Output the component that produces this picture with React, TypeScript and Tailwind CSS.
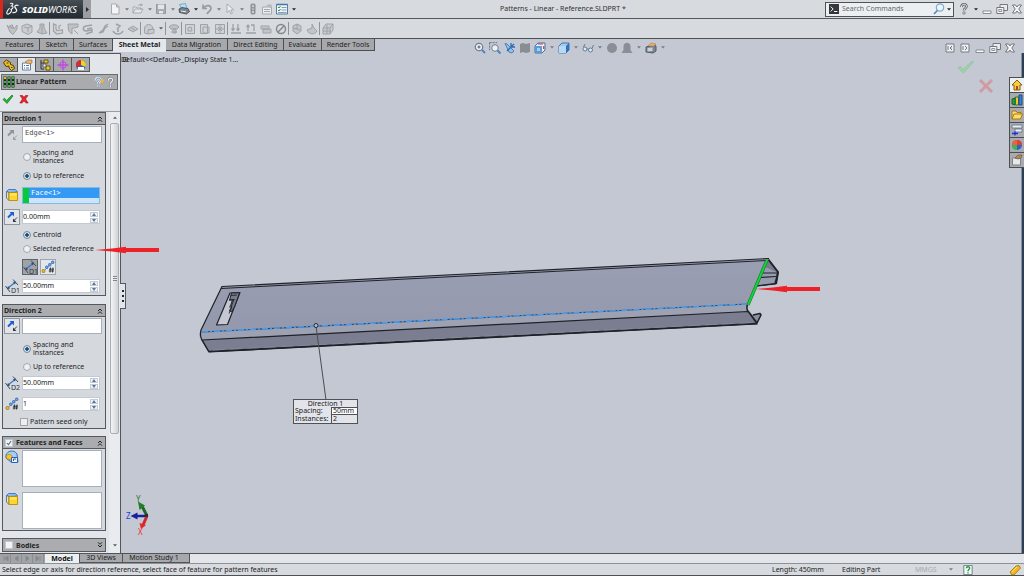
import React from 'react';

type Kids = { children?: React.ReactNode; className?: string };

function Ico({ children, className = 'size-3' }: Kids) {
  return (
    <svg viewBox="0 0 12 12" className={`shrink-0 ${className}`} fill="none" aria-hidden="true">
      {children}
    </svg>
  );
}

function IconButton({ label, children, className = '' }: Kids & { label: string }) {
  return (
    <button type="button" aria-label={label} className={`flex shrink-0 items-center justify-center ${className}`}>
      {children}
    </button>
  );
}

function Caret({ label, className = 'w-[11px]', color = '#55595e' }: { label: string; className?: string; color?: string }) {
  return (
    <IconButton label={label} className={className}>
      <svg viewBox="0 0 4 3" className="h-[3px] w-1" aria-hidden="true">
        <path d="M0 .3h4L2 2.6z" fill={color} />
      </svg>
    </IconButton>
  );
}

/* ---------- title bar ---------- */

const fileIcons: { label: string; art: React.ReactNode; caret: string }[] = [
  { label: 'New', caret: '#777', art: <path d="M2.500 1h5L10 3.500V11H2.500zM7.500 1v3H10" stroke="#a7abb0" fill="#f2f4f6" /> },
  { label: 'Open', caret: '#777', art: <path d="M1 10V4h3l1 1h4v2M1 10l2-4h8l-2 4zM6 3c1-2 3-2 4-1M10 .5v2H8" stroke="#a2a6ab" fill="#e4e7ea" strokeWidth=".9" /> },
  { label: 'Save', caret: '#777', art: <><path d="M1.500 1.500h9v9h-9z" fill="#a9adb2" stroke="#979ba0" /><path d="M3 1.500h6V6H3zM4 8h4v2.500H4z" fill="#e3e6e9" /></> },
  { label: 'Print', caret: '#222', art: <><path d="M1.500 1.500l6-1 1.500 5-5 1z" fill="#b7ddf5" stroke="#5c96bd" strokeWidth=".7" /><path d="M1 6l3-1.500 6 1 1.500 3-3 2.500-7-1.500z" fill="#7b848d" stroke="#30373e" strokeWidth=".7" /><path d="M3 8l5 .8" stroke="#e8edf0" /></> },
  { label: 'Undo', caret: '#777', art: <path d="M2 1.500v4h4M2.500 5C5 1.500 10 2 10 5.500 10 8 7 8.500 6 11" stroke="#999da3" strokeWidth="1.700" /> },
  { label: 'Select', caret: '#777', art: <path d="M3 1v8.500l2.200-2L7 11l1.400-.7-1.600-3.400h3z" stroke="#9da1a6" fill="#edf0f2" strokeWidth=".8" /> },
];

function TitleBar() {
  return (
    <header className="flex h-[19px] shrink-0 items-center border-b border-[#55585b] bg-[#d7dade]">
      <div className="flex h-[18px] w-[83px] shrink-0 items-center border-l-[3px] border-[#d8271f] bg-gradient-to-b from-[#454e55] to-[#222a31] pl-[3px] text-white">
        <svg viewBox="0 0 14 14" className="size-3.5 shrink-0" fill="none" stroke="#f5f7f8" aria-hidden="true">
          <path d="M4 1.500c3-.8 4 .8 1.500 2.500 2 .3 2.500 2.500-1 3.500M3.500 6C1 9 0 11.500 1.500 12s4.500-2 4-4.500" strokeWidth="1.100" />
          <path d="M12.500 3.500c-2.500-1-4.500.2-3.500 2l1.500 2c1 2-1.500 3.500-4 3" strokeWidth="1.300" />
        </svg>
        <span className="ml-0.5 pt-[2px] text-[9px] leading-3">
          <b className="font-extrabold italic">SOLID</b><i>WORKS</i>
        </span>
      </div>
      <IconButton label="Show menu" className="h-[18px] w-2 bg-[#9a9da1]">
        <svg viewBox="0 0 3 5" className="h-[5px] w-[3px]" aria-hidden="true"><path d="M0 0l3 2.500L0 5z" fill="#26292c" /></svg>
      </IconButton>
      <div className="ml-[18px] flex items-center">
        {fileIcons.map((i) => (
          <React.Fragment key={i.label}>
            <IconButton label={i.label}><Ico>{i.art}</Ico></IconButton>
            <Caret label={`${i.label} options`} color={i.caret} />
          </React.Fragment>
        ))}
        <IconButton label="Rebuild" className="mr-[2px]">
          <Ico><rect x="3.500" y=".5" width="5" height="11" rx="1.800" fill="#8e9297" /><circle cx="6" cy="3" r="1.200" fill="#c8cbce" /><circle cx="6" cy="6" r="1.200" fill="#b4b7bb" /><circle cx="6" cy="9" r="1.200" fill="#c8cbce" /></Ico>
        </IconButton>
        <IconButton label="File properties" className="mr-[3px]">
          <Ico><path d="M1.500 4h9v7h-9z" fill="#eceef0" stroke="#a5a8ad" /><path d="M3 6.500h6M3 8.500h6" stroke="#a5a8ad" /><path d="M5 3l3-2 3 1-1 3z" fill="#b7babe" /></Ico>
        </IconButton>
        <IconButton label="Options">
          <Ico><path d="M.5 1.500h11v9.500H.5z" fill="#eef5fb" stroke="#5b7ea3" /><path d="M.5 1.500h11" stroke="#3e74b0" strokeWidth="1.500" /><path d="M2 4l1 1 1.500-2M2 7l1 1 1.500-2" stroke="#2c9b36" /><path d="M5.500 4.500h5M5.500 7h5M2 9.500h8.500" stroke="#75869a" strokeWidth=".8" /></Ico>
        </IconButton>
        <Caret label="Options menu" color="#222" />
      </div>
      <h1 className="flex-1 pl-[201px] text-[7px] leading-3 whitespace-nowrap text-[#303236]">Patterns - Linear - Reference.SLDPRT *</h1>
      <div className="flex h-[15px] w-[129px] items-center border border-[#505356] bg-[#eceff2] pl-[3px]">
        <Ico className="size-[10px]"><path d="M0 0h12v12H0z" fill="#33373b" /><path d="M2 3l3 3-3 3M6 9h4" stroke="#fff" strokeWidth="1.200" /></Ico>
        <input aria-label="Search Commands" placeholder="Search Commands" className="ml-[3px] h-3 min-w-0 flex-1 bg-transparent text-[7px] leading-3 outline-none placeholder:text-[#66696d]" />
        <IconButton label="Search">
          <Ico><circle cx="7" cy="4.500" r="3.700" fill="#e9f6ff" stroke="#7fa6cc" strokeWidth="1.200" /><path d="M4.300 7.500L1 11" stroke="#5b86bb" strokeWidth="1.700" /></Ico>
        </IconButton>
        <Caret label="Search scope" className="w-2" color="#222" />
      </div>
      <div className="flex items-center pl-1">
        <IconButton label="Help"><Ico><path d="M3.500 4c0-3.500 5-3.500 5-.7C8.500 5.500 6 5 6 7.500" stroke="#62666b" strokeWidth="2.600" /><path d="M3.500 4c0-3.500 5-3.500 5-.7C8.500 5.500 6 5 6 7.500" stroke="#f2f4f5" strokeWidth="1" /><circle cx="6" cy="10" r="1.200" fill="#f2f4f5" stroke="#62666b" strokeWidth=".8" /></Ico></IconButton>
        <Caret label="Help menu" color="#222" />
        <WindowButtons />
      </div>
    </header>
  );
}

function WindowButtons() {
  return (
    <div className="flex items-center gap-[3px] pr-px">
      <IconButton label="Minimize"><Ico><path d="M2 8h8v2.500H2z" fill="#f8f9fa" stroke="#74787e" strokeWidth=".8" /></Ico></IconButton>
      <IconButton label="Restore"><Ico><path d="M4 1.500h7.500v6H4z" fill="#e9ebee" stroke="#74787e" /><path d="M.8 4.500h7v6h-7z" fill="#f6f7f8" stroke="#74787e" /><path d="M2.800 6.500h3v2h-3z" stroke="#74787e" strokeWidth=".8" /></Ico></IconButton>
      <IconButton label="Close"><Ico><path d="M1.500 2h3L6 4l1.500-2h3L7.800 6l2.700 4h-3L6 8l-1.500 2h-3l2.700-4z" fill="#f4f5f6" stroke="#686c72" strokeWidth=".9" /></Ico></IconButton>
    </div>
  );
}

/* ---------- sheet metal toolbar ---------- */

const G = '#9fa2a6';
const sheetTools: { label: string; art: React.ReactNode; sep?: boolean; caret?: boolean }[] = [
  { label: 'Base Flange', art: <path d="M1 2l3 7 3 2.500L11 6V2L8 6 6 1.500v4L4 2v3z" fill="#c0c3c6" stroke={G} /> },
  { label: 'Convert to Sheet Metal', art: <path d="M1 3l5-2 5 2v6l-4 2.500-6-3zM3 4l4 1v4M7 5l4-2" fill="#c9ccd0" stroke={G} /> },
  { label: 'Lofted Bend', art: <path d="M4 1h4v4l3 5-5 1-5-2 3-4zM6 1v10" fill="#c0c3c6" stroke={G} />, sep: true },
  { label: 'Edge Flange', art: <path d="M1.500 1v7l3 3 6-1V7L5 7.500 4 6V2zM7 6V3l2-1" fill="#d2d5d8" stroke={G} strokeWidth="1.200" /> },
  { label: 'Miter Flange', art: <path d="M1 1h10v3L5 5.500V11L1.500 8zM7 7l4 4" fill="#bfc2c5" stroke={G} /> },
  { label: 'Hem', art: <path d="M10 2L4 3C0 4 1 8 4 8l6-1v2l-6 2M10 5L5 6" stroke={G} strokeWidth="1.500" /> },
  { label: 'Jog', art: <path d="M11 1L8 3 6 7 2 10M11 3L8 5 6 9l-4 1" stroke={G} strokeWidth="1.300" /> },
  { label: 'Sketched Bend', art: <path d="M4 1l4 2-3 3M6 6v3M1 8c2 4 8 4 10 0" stroke={G} strokeWidth="1.600" /> },
  { label: 'Cross-Break', art: <path d="M1 6l5-3 5 3-5 3zM3.500 4.500l5 3" fill="#c3c6c9" stroke={G} />, sep: true },
  { label: 'Corners', art: <path d="M1.500 10V6c0-6 8-6 8.500 0l-5 1v4zM5 7l6-1v4l-6 1" fill="#c9ccd0" stroke={G} />, sep: true, caret: true },
  { label: 'Forming Tool', art: <path d="M1 4c2-3 8-3 10 0L9 6H3zM5 6h3v4H5zM3 9h6" fill="#bfc2c5" stroke={G} />, sep: true },
  { label: 'Extruded Cut', art: <path d="M1.500 1.500h9v9h-9zM4 5l3-1 1 4H4z" fill="#d0d3d6" stroke={G} /> },
  { label: 'Simple Hole', art: <path d="M1.500 1.500h7v9h-7zM4 4h6v6H4z" fill="#d0d3d6" stroke={G} /> },
  { label: 'Vent', art: <path d="M1.500 1.500h9v9h-9zM6 1.500v9M1.500 6h9M4 4l4 4M8 4L4 8" fill="#d0d3d6" stroke={G} />, sep: true },
  { label: 'Unfold', art: <path d="M3 1v6M1.500 5.500L3 7.500l1.500-2M8 1v6M6.500 5.500L8 7.500l1.500-2M1 10h10" stroke={G} strokeWidth="1.300" /> },
  { label: 'Fold', art: <path d="M3 8V2M1.500 4L3 2l1.500 2M6 2h3v6M1 10h10" stroke={G} strokeWidth="1.300" /> },
  { label: 'Flatten', art: <path d="M1 3h8v3H1zM3 6h8v4H3z" fill="#c3c6c9" stroke={G} /> },
  { label: 'No Bends', art: <><circle cx="6" cy="6" r="4.500" stroke="#84878b" strokeWidth="1.400" /><path d="M3 9l6-6" stroke="#84878b" strokeWidth="1.400" /></>, sep: true },
  { label: 'Rip', art: <path d="M2 3l4-2 4 2v5l-4 3-4-3zM2 5l7 2M6 1v5" fill="#c3c6c9" stroke={G} /> },
  { label: 'Insert Bends', art: <path d="M6 1v4L1 7c2 5 8 5 10 1L8 5z" fill="#c3c6c9" stroke={G} />, sep: true },
  { label: 'Swept Flange', art: <path d="M4 1h7v6l-3 4H1V5zM1 5h7v6M8 5l3-4M1 8h8M5 2v9" fill="#c9ccd0" stroke={G} /> },
];

function SheetToolbar() {
  return (
    <div role="toolbar" aria-label="Sheet metal" className="flex h-5 shrink-0 items-center border-b border-[#4f5255] bg-[#d7dade] pl-1">
      {sheetTools.map((t) => (
        <React.Fragment key={t.label}>
          <IconButton label={t.label} className="w-[15px]"><Ico>{t.art}</Ico></IconButton>
          {t.caret && <Caret label={`${t.label} menu`} className="w-[9px]" />}
          {t.sep && <span className="h-[13px] w-px bg-[#8f9296]" />}
        </React.Fragment>
      ))}
    </div>
  );
}

/* ---------- command tabs and view toolbar ---------- */

const tabs = [
  { name: 'Features', w: 'w-10' },
  { name: 'Sketch', w: 'w-[34px]' },
  { name: 'Surfaces', w: 'w-[39px]' },
  { name: 'Sheet Metal', w: 'w-[53px]' },
  { name: 'Data Migration', w: 'w-[62px]' },
  { name: 'Direct Editing', w: 'w-14' },
  { name: 'Evaluate', w: 'w-[38px]' },
  { name: 'Render Tools', w: 'w-[53px]' },
];

function CommandTabs() {
  return (
    <nav role="tablist" aria-label="Commands" className="flex h-[13px] w-[375px] shrink-0">
      {tabs.map((t) => {
        const on = t.name === 'Sheet Metal';
        return (
          <button
            key={t.name}
            type="button"
            role="tab"
            aria-selected={on}
            className={`${t.w} shrink-0 whitespace-nowrap text-[7px] leading-[11px] ${on ? 'bg-[#e4e7eb] pb-[2px] font-bold text-[#222]' : 'h-3 border-r border-b border-[#4d5053] bg-[#a6a8ab] text-[#1f2123]'}`}
          >
            {t.name}
          </button>
        );
      })}
    </nav>
  );
}

const lens = (
  <><circle cx="5" cy="5" r="3.700" fill="#eaf2f8" stroke="#6f7d8b" strokeWidth="1.200" /><path d="M8 8l3 3" stroke="#4b86c6" strokeWidth="2" /></>
);

function ViewToolbar() {
  const c = '#777b82';
  return (
    <div role="toolbar" aria-label="View" className="flex h-[15px] items-center gap-[3px]">
      <IconButton label="Zoom to fit"><Ico>{lens}<path d="M3.500 5h3M5 3.500v3" stroke="#4d5964" /></Ico></IconButton>
      <IconButton label="Zoom to area"><Ico><circle cx="6" cy="6" r="3.300" fill="#eaf2f8" stroke="#6f7d8b" /><path d="M8.500 8.500l3 3" stroke="#4b86c6" strokeWidth="2" /><path d="M.6 .6h7.500M.6 .6v7.500" stroke="#6b7178" strokeDasharray="2 1" /></Ico></IconButton>
      <IconButton label="Previous view"><Ico><path d="M1 1.500l2 .5 7 7-2 2-3-1z" fill="#8fc3ec" stroke="#3d79b5" strokeWidth=".9" /><path d="M3 9l7-7M7 1v4h4" stroke="#2b6cb2" strokeWidth="1.300" /></Ico></IconButton>
      <IconButton label="Section view"><Ico><path d="M1 2l3-1 3 1 4-1v9l-4 1-3-1-3 1z" fill="#8a8d93" /></Ico></IconButton>
      <IconButton label="View orientation"><Ico><path d="M1 4l3-3h7v7l-3 3H1z" fill="#eaf3fb" stroke="#466f9b" /><path d="M1 4h7v7H1z" fill="#5a9bda" /><path d="M4 2h5M9.700 4v3" stroke="#cc3f38" strokeWidth="1.200" /><path d="M3 6h3v3H3z" fill="#a9cff0" /></Ico></IconButton>
      <Caret label="View orientation menu" className="w-[6px]" color={c} />
      <IconButton label="Display style"><Ico><path d="M1 4l3-3h7v7l-3 3H1z" fill="#9acbf3" stroke="#48739f" /><path d="M8 4l3-3v7l-3 3z" fill="#2f72c0" /><path d="M1 4h7v7H1z" fill="#b5d9f7" /></Ico></IconButton>
      <Caret label="Display style menu" className="w-[6px]" color={c} />
      <IconButton label="Hide or show items"><Ico><circle cx="3" cy="7" r="2" fill="#d9edf8" stroke="#5f7386" strokeWidth=".9" /><circle cx="8.500" cy="8" r="2" fill="#d9edf8" stroke="#5f7386" strokeWidth=".9" /><path d="M1.500 5L3 2M5 7h1.500M10 6.500L11.500 3" stroke="#5f7386" strokeWidth=".9" /></Ico></IconButton>
      <Caret label="Hide or show menu" className="w-[6px]" color={c} />
      <IconButton label="Edit appearance"><Ico><circle cx="6" cy="6" r="5" fill="#8b8e94" /></Ico></IconButton>
      <IconButton label="Apply scene"><Ico><path d="M2.500 8V4.500c0-5 7-5 7 0V8l2 3H.5z" fill="#8b8e94" /></Ico></IconButton>
      <Caret label="Scene menu" className="w-[6px]" color={c} />
      <IconButton label="View settings"><Ico><path d="M1 5l7-2 3 1v5l-3 2-7-1z" fill="#7d858d" stroke="#555b62" /><path d="M2.500 6l5-.5v3.500l-5 .5z" fill="#c9d1d8" /><path d="M3 4l3-3 5 1-2 2z" fill="#e8b270" stroke="#9a7342" strokeWidth=".5" /></Ico></IconButton>
      <Caret label="View settings menu" className="w-[6px]" color={c} />
    </div>
  );
}

/* ---------- property manager ---------- */

function Reverse({ dim }: { dim?: boolean }) {
  return (
    <IconButton label="Reverse direction" className={`size-4 ${dim ? '' : 'border border-[#8f959c] bg-[#e1e5ea]'}`}>
      <svg viewBox="0 0 12 12" className="size-3" aria-hidden="true">
        <path d="M2 6.500l4-4" stroke={dim ? '#8f949a' : '#1d5fd0'} strokeWidth="2" />
        <path d="M3.500 1H8v4.500z" fill={dim ? '#8f949a' : '#1d5fd0'} />
        <path d="M11 6.500L8.500 9" stroke={dim ? '#9a9fa5' : '#33373b'} />
        <path d="M7 7.500V11h3.500z" fill={dim ? '#9a9fa5' : '#33373b'} />
      </svg>
    </IconButton>
  );
}

function DimIcon({ n }: { n: string }) {
  return (
    <span className="relative flex size-4 shrink-0 items-center justify-center">
      <svg viewBox="0 0 14 14" className="size-3.5" fill="none" aria-hidden="true">
        <path d="M8 .5l5 5.500M.5 7l4.500 6" stroke="#454a50" />
        <path d="M3 9l7-5.500" stroke="#3a78c8" strokeWidth="1.300" />
        <path d="M2 10.300l1-3.300 2 2.600zM11 2.500L8 3l2 2.600z" fill="#274d86" />
      </svg>
      <span className="absolute right-0 bottom-0 text-[7px] leading-[6px] text-[#303439]">{n}</span>
    </span>
  );
}

function InstancesIcon() {
  return (
    <span className="flex size-4 shrink-0 items-center justify-center">
      <svg viewBox="0 0 14 14" className="size-3.5" fill="none" aria-hidden="true">
        <path d="M3 11l8-8" stroke="#49a" strokeWidth=".7" />
        <rect x="1" y="9.500" width="3" height="3" rx="1" fill="#f0b429" stroke="#936713" strokeWidth=".6" />
        <rect x="4.500" y="6" width="2.500" height="2.500" rx="1" fill="#72a9ed" stroke="#2b60b5" strokeWidth=".8" />
        <rect x="7.500" y="3.500" width="2.500" height="2.500" rx="1" fill="#72a9ed" stroke="#2b60b5" strokeWidth=".8" />
        <rect x="10.500" y="1" width="2.500" height="2.500" rx="1" fill="#72a9ed" stroke="#2b60b5" strokeWidth=".8" />
        <path d="M9.500 7.500l-.5 5M12 7.500l-.5 5M8 9.200h5M7.800 11h5" stroke="#25292d" strokeWidth=".9" />
      </svg>
    </span>
  );
}

function Cube() {
  return (
    <span className="flex size-4 shrink-0 items-start justify-center">
      <svg viewBox="0 0 14 14" className="size-3.5" aria-hidden="true">
        <path d="M1.500 3.500l2-2h7l2 2.500-8.500 .5z" fill="#8fbdf0" stroke="#3f6fb8" strokeWidth=".9" />
        <path d="M1.500 3.500L4 4.500v8L1.500 10z" fill="#f7e68c" stroke="#3f6fb8" strokeWidth=".9" />
        <path d="M4 4.500h8.500v8H4z" fill="#fdd62a" stroke="#b58a10" strokeWidth=".9" />
        <path d="M5 5.500h6.500v2H5z" fill="#ffea70" />
      </svg>
    </span>
  );
}

function FeatureIcon() {
  return (
    <span className="flex size-4 shrink-0 items-start justify-center">
      <svg viewBox="0 0 14 14" className="size-3.5" fill="none" aria-hidden="true">
        <path d="M1 8V5c1-4 8-6 11-1l1 8H6z" fill="#a9cdf0" stroke="#3a6fb1" />
        <path d="M1 6c2-2 5-2 6 0v4L2 9z" fill="#f4c828" stroke="#a98312" strokeWidth=".7" />
        <path d="M6.500 7.500h6v5h-6z" fill="#e9f2fb" stroke="#2962b7" />
        <path d="M8.500 11V9h2.500" stroke="#2962b7" />
      </svg>
    </span>
  );
}

function Group({ title, children, check, closed, className = '' }: Kids & { title: string; check?: 'on' | 'off'; closed?: boolean }) {
  return (
    <section className={`shrink-0 border border-[#55585c] bg-[#d5d9de] ${className}`}>
      <h2 className={`flex h-3 items-center bg-[#aaacaf] text-[7px] leading-[11px] font-bold text-[#222426] ${closed ? '' : 'border-b border-[#55585c]'} ${check ? 'pl-[2px]' : 'pl-px'}`}>
        {check ? (
          <label className="flex flex-1 items-center gap-[3px]">
            <Check on={check === 'on'} />
            {title}
          </label>
        ) : (
          <span className="flex-1">{title}</span>
        )}
        <IconButton label={`Toggle ${title}`} className="mr-[2px]">
          <svg viewBox="0 0 6 6" className={`size-[6px] ${closed ? 'rotate-180' : ''}`} fill="none" stroke="#222" aria-hidden="true">
            <path d="M1 3l2-2 2 2M1 5.700l2-2 2 2" strokeWidth="1" />
          </svg>
        </IconButton>
      </h2>
      {children}
    </section>
  );
}

function Check({ on, dim }: { on?: boolean; dim?: boolean }) {
  return (
    <span className="relative flex size-2 shrink-0">
      <input type="checkbox" defaultChecked={on} className={`size-2 appearance-none border ${dim ? 'border-[#a1a5aa] bg-[#eceef0]' : 'border-[#c3c6ca] bg-[#f1f3f5]'}`} />
      {on && (
        <svg viewBox="0 0 8 8" className="pointer-events-none absolute inset-0" fill="none" aria-hidden="true"><path d="M2 4l1.500 1.700L6 2" stroke="#456790" strokeWidth="1.100" /></svg>
      )}
    </span>
  );
}

function Radio({ name, children, on, className = '' }: Kids & { name: string; on?: boolean }) {
  return (
    <label className={`flex items-center gap-[2px] pl-5 text-[7px] leading-2 text-[#232527] ${className}`}>
      <input
        type="radio"
        name={name}
        defaultChecked={on}
        className="size-2 shrink-0 appearance-none rounded-full border border-[#a4a9af] bg-[#eef0f2] checked:border-[#7a858f] checked:bg-[radial-gradient(circle,#174f82_0_35%,#d3e4ef_50%)]"
      />
      <span>{children}</span>
    </label>
  );
}

function Spin({ label, value }: { label: string; value: string }) {
  return (
    <div className="flex h-3.5 w-[78px] items-center border border-[#c2c9d4] bg-white">
      <input aria-label={label} defaultValue={value} className="h-3 min-w-0 flex-1 bg-transparent text-[7px] leading-3 text-[#222] outline-none" />
      <div className="flex w-[9px] flex-col gap-px">
        {['M0 3l2-3 2 3z', 'M0 0h4L2 3z'].map((d, i) => (
          <button key={d} type="button" aria-label={i ? `Decrease ${label}` : `Increase ${label}`} className="flex h-[5px] w-2 items-center justify-center border border-[#c3cbd5] bg-[#eef1f5]">
            <svg viewBox="0 0 4 3" className="h-[3px] w-1 shrink-0" aria-hidden="true"><path d={d} fill="#5c7597" /></svg>
          </button>
        ))}
      </div>
    </div>
  );
}

const row = 'flex items-center gap-[2px] pl-px';

function PanelTabs() {
  const items = [
    { label: 'Feature tree', art: <><path d="M.5 3.500L3.500 1l4 2.500v2l3 1 1 3L8.500 11.500 6 9V7L3 7.500z" fill="#f0bf22" stroke="#4c3d0c" /><path d="M3.500 4h2M8 8.500h1.500" stroke="#4c3d0c" /></> },
    { label: 'Properties', art: <><path d="M1.500 4h8v7h-8z" fill="#fff" stroke="#6b7f99" /><path d="M3 6.500h1M5 6.500h3M3 9h1M5 9h3" stroke="#3974c0" /><path d="M4 3l3-2h4v3L8 5z" fill="#e8b36a" stroke="#956a2d" strokeWidth=".6" /></> },
    { label: 'Configurations', art: <><path d="M2 1v9h3M2 4h3" stroke="#333" /><path d="M5 1h4v3H5zM7 7h4v4H7z" fill="#f4cb24" stroke="#4c3d0c" strokeWidth=".8" /><path d="M4 5h3v3H4z" fill="#e7ecf1" stroke="#444" strokeWidth=".7" /></> },
    { label: 'Dimensions', art: <><circle cx="6" cy="6" r="3.200" fill="#d08ae0" stroke="#b552cf" /><path d="M6 .5v11M.5 6h11" stroke="#b552cf" strokeWidth="1.300" /></> },
    { label: 'Display', art: <><circle cx="6" cy="6" r="5" fill="#2b61c4" /><path d="M6 6V1a5 5 0 0 1 4.500 7z" fill="#f3d321" /><path d="M6 6L1.700 8.500A5 5 0 0 1 6 1z" fill="#d92b2b" /><path d="M3 8h6v3H3z" fill="#f5f7f9" /></> },
  ];
  return (
    <div className="mt-[3px] flex">
      {items.map((i, n) => (
        <IconButton key={i.label} label={i.label} className={`h-[15px] w-[18px] border-t border-r border-[#54575a] ${n === 1 ? 'bg-[#e3e6ea]' : 'border-b bg-[#a6a8ab]'}`}>
          <Ico>{i.art}</Ico>
        </IconButton>
      ))}
    </div>
  );
}

function PropertyPanel() {
  return (
    <aside className="flex w-[121px] shrink-0 flex-col border-t border-r border-[#54575a] bg-[#e2e5ea]">
      <PanelTabs />
      <div className="mt-[2px] mr-[2px] ml-px flex h-4 items-center border border-[#6a6d70] bg-[#a9abae] px-px">
        <svg viewBox="0 0 12 12" className="size-3" aria-hidden="true">
          <path d="M.5 .5h3v11h-3zM4.500 .5h3v11h-3zM8.500 .5h3v11h-3z" fill="#1d261d" />
          <circle cx="2" cy="2" r="1.200" fill="#e7c324" />
          <path d="M1 5h2v2H1zM1 9h2v2H1zM5 1h2v2H5zM9 1h2v2H9zM5 5h2v2H5zM9 5h2v2H9zM5 9h2v2H5zM9 9h2v2H9z" fill="#39b54a" />
        </svg>
        <h2 className="ml-px flex-1 text-[7px] leading-3 font-bold text-[#222426]">Linear Pattern</h2>
        <IconButton label="What's new"><Ico className="size-[11px]"><path d="M2 4c0-3.500 5-3.500 5-.7C7 5.500 4.500 5 4.500 7.500M4.500 9v2" stroke="#f1f6fb" strokeWidth="2.400" /><path d="M2 4c0-3.500 5-3.500 5-.7C7 5.500 4.500 5 4.500 7.500M4.500 9v2" stroke="#4b79b4" /><path d="M9 2v4M7 4h4" stroke="#f1b92e" strokeWidth="1.700" /></Ico></IconButton>
        <IconButton label="Panel help"><Ico className="size-[11px]"><path d="M3.500 4c0-3.500 5-3.500 5-.7C8.500 5.500 6 5 6 7.500M6 9v2" stroke="#777b80" strokeWidth="2.400" /><path d="M3.500 4c0-3.500 5-3.500 5-.7C8.500 5.500 6 5 6 7.500M6 9v2" stroke="#f4f5f6" strokeWidth="1.200" /></Ico></IconButton>
      </div>
      <div className="flex h-[22px] items-center gap-1 border-b border-[#9a9da1] pb-1 pl-[2px]">
        <IconButton label="OK"><Ico><path d="M1 6.500l1.500-1.300L4.500 7.500 10 2l1 1-6 7.500z" fill="#27b336" stroke="#147a20" strokeWidth=".7" /></Ico></IconButton>
        <IconButton label="Cancel"><Ico><path d="M2 2.500h2.500L6 4.300l1.500-1.800H10L7.500 6l2.700 4H7.800L6 7.700 4.200 10H1.800l2.700-4z" fill="#e8262b" stroke="#a71216" strokeWidth=".6" /></Ico></IconButton>
      </div>
      <div className="flex min-h-0 flex-1">
        <div className="flex min-w-0 flex-1 flex-col overflow-hidden pr-[3px] pl-[2px]">
          <Group title="Direction 1">
            <div className="flex flex-col pt-px pb-px">
              <div className={row}>
                <Reverse dim />
                <input aria-label="Direction 1 reference" defaultValue="Edge<1>" className="h-[17px] w-20 min-w-0 border border-[#a4afc0] bg-white pb-[3px] pl-[2px] font-['DejaVu_Sans_Mono',monospace] text-[7px] leading-2 text-[#494c50] outline-none" />
              </div>
              <Radio name="mode1" className="mt-[6px] h-4">Spacing and<br />instances</Radio>
              <Radio name="mode1" on className="mt-[6px] h-[10px]">Up to reference</Radio>
              <div className={`${row} mt-[6px]`}>
                <Cube />
                <div className="flex h-[17px] w-[78px] border border-[#86b9e2] bg-[#cbe4f8]">
                  <span className="w-[6px] bg-[#08c93a]" />
                  <span className="h-[10px] flex-1 bg-[#3399f5] pl-[2px] font-['DejaVu_Sans_Mono',monospace] text-[7px] leading-[10px] text-white">Face&lt;1&gt;</span>
                </div>
              </div>
              <div className={`${row} mt-[5px]`}>
                <Reverse />
                <Spin label="Offset distance" value="0.00mm" />
              </div>
              <Radio name="base" on className="mt-[5px] h-[10px]">Centroid</Radio>
              <Radio name="base" className="mt-1 h-[10px]">Selected reference</Radio>
              <div className="mt-[5px] flex gap-[2px] pl-[19px]">
                <IconButton label="Set spacing" className="size-4 border border-[#5f6469] bg-[#9fa3a8]"><DimIcon n="D1" /></IconButton>
                <IconButton label="Set number of instances" className="size-4 border border-[#a1a6ac] bg-[#e3e6ea]"><InstancesIcon /></IconButton>
              </div>
              <div className={`${row} mt-[3px]`}>
                <DimIcon n="D1" />
                <Spin label="Direction 1 spacing" value="50.00mm" />
              </div>
            </div>
          </Group>

          <Group title="Direction 2" className="mt-2">
            <div className="flex flex-col pt-px">
              <div className={row}>
                <Reverse />
                <input aria-label="Direction 2 reference" className="h-4 w-20 min-w-0 border border-[#a4afc0] bg-white outline-none" />
              </div>
              <Radio name="mode2" on className="mt-[7px] h-4">Spacing and<br />instances</Radio>
              <Radio name="mode2" className="mt-[5px] h-[10px]">Up to reference</Radio>
              <div className={`${row} mt-[3px]`}>
                <DimIcon n="D2" />
                <Spin label="Direction 2 spacing" value="50.00mm" />
              </div>
              <div className={`${row} mt-[5px]`}>
                <InstancesIcon />
                <Spin label="Direction 2 instances" value="1" />
              </div>
              <label className="mt-1 flex h-3 items-center gap-[2px] pl-[17px] text-[7px] leading-2 text-[#232527]">
                <Check dim />
                Pattern seed only
              </label>
            </div>
          </Group>

          <Group title="Features and Faces" check="on" className="mt-[7px]">
            <div className="flex flex-col gap-[5px] pt-px pb-px">
              <div className="flex gap-[2px] pl-px">
                <FeatureIcon />
                <textarea aria-label="Features to pattern" className="h-[37px] w-20 resize-none border border-[#a4afc0] bg-white outline-none" />
              </div>
              <div className="flex gap-[2px] pl-px">
                <Cube />
                <textarea aria-label="Faces to pattern" className="h-[37px] w-20 resize-none border border-[#a4afc0] bg-white outline-none" />
              </div>
            </div>
          </Group>

          <Group title="Bodies" check="off" closed className="mt-[7px]" />
        </div>
        <div className="flex w-[11px] shrink-0 flex-col items-center bg-[#e9ecef]">
          <Caret label="Scroll up" className="h-[11px] w-[10px] rotate-180" />
          <div className="flex h-[311px] w-[9px] items-center justify-center rounded-xs border border-[#a9adb2] bg-gradient-to-r from-[#f4f5f6] to-[#cfd2d6]">
            <span className="h-[5px] w-1 border-y border-[#80858b] bg-[linear-gradient(#e8eaec_1px,#80858b_1px_2px,#e8eaec_2px)]" />
          </div>
          <span className="flex-1" />
          <Caret label="Scroll down" className="h-4 w-[10px]" />
        </div>
      </div>
    </aside>
  );
}

/* ---------- graphics area ---------- */

function RedArrow({ className }: { className: string }) {
  return (
    <svg viewBox="0 0 64 8" className={`pointer-events-none absolute h-2 w-16 ${className}`} aria-hidden="true">
      <path d="M0 4L17 2.500 31 .7V2H64V6H31V7.300L17 5.500z" fill="#ee2128" />
    </svg>
  );
}

function Model() {
  return (
    <svg viewBox="121 53 900 500" className="absolute inset-0 size-full" fill="none" aria-hidden="true">
      <defs>
        <linearGradient id="top" x1="0" y1="0" x2="0" y2="1">
          <stop offset="0" stopColor="#999eb2" />
          <stop offset="1" stopColor="#9297ac" />
        </linearGradient>
      </defs>
      <g strokeLinejoin="round" stroke="#202228">
        <path d="M767 258l11 14-2 12-20 2z" fill="#777b8c" />
        <path d="M763 266l11 5 3 1-3 11-17 2z" fill="#969baf" stroke="none" />
        <path d="M763 273h14M761 277.500l15-1M757 286l18-2.500 3-10" strokeWidth="1.200" />
        <path d="M768 259l10 13-2 12" strokeWidth="2" />
        <path d="M748 311l9 12 4-8-1-1.500-7 1.500" fill="#8b8fa0" strokeWidth="1.600" />
        <path d="M222 286.500l547-28-22 46v7l10 12.500-548 28-8-12c-2-3-2-6 0-10z" fill="url(#top)" stroke="none" />
        <path d="M202 333l545-28.500v6.500L202 340c-1-3-1-5 0-7z" fill="#9da1b2" stroke="none" />
        <path d="M202 340l546-28.500 9 12.500-548 28z" fill="#7b7d90" strokeWidth="1.200" />
        <path d="M769 258.500l-547 28-21 43.500c-1 4-1 7 1 10l7 12" strokeWidth="1.200" />
        <path d="M747.500 304c-1 3-1 5 .5 8" strokeWidth="1.500" />
        <path d="M221 288.500l546-28" />
        <path d="M209 351.500l548-28" strokeWidth="1.600" />
        <path d="M213 350l540-27.500" stroke="#8b8ea0" strokeWidth=".7" strokeDasharray="12 5" />
        <path d="M230 293l10-.5-12.500 32-11 .5z" fill="#c4c8d3" strokeWidth="1.200" />
        <path d="M231.500 293l8-.2-5 14-3 5-2-1 2-4-1-1 2-6-3 .5z" fill="#777b8b" />
        <path d="M231 295.500l6-.5M229.500 300l5-.5M234 299l-2.500 7M229 307l3-.5-3 7" strokeWidth=".9" />
      </g>
      <path d="M202 332l545-28" stroke="#30455f" strokeWidth="1.100" />
      <path d="M202 332l545-28" stroke="#459ff5" strokeWidth="1.600" strokeDasharray="6 2 2 2" />
      <path d="M767 260l-19 45" stroke="#0b7822" strokeWidth="3.200" />
      <path d="M767 260l-19 45" stroke="#18d03c" strokeWidth="2" />
      <path d="M316 326l10 74" stroke="#4c4d50" strokeWidth="1" />
      <circle cx="316" cy="325.500" r="2" fill="#b8c0c8" stroke="#22262b" />
    </svg>
  );
}

function Callout() {
  return (
    <div className="absolute top-[346px] left-[172px] w-[65px] border border-[#4e5156] bg-[#e2e4e9] text-[7px] leading-2 text-[#222]">
      <div className="h-[7px] text-center leading-[7px]">Direction 1</div>
      <label className="flex h-2 items-center">
        <span className="w-[37px] pl-px">Spacing:</span>
        <input defaultValue="50mm" className="h-2 min-w-0 flex-1 border border-r-0 border-[#4e5156] bg-white pl-px outline-none" />
      </label>
      <label className="flex h-2 items-center">
        <span className="w-[37px] pl-px">Instances:</span>
        <input defaultValue="2" className="h-2 min-w-0 flex-1 border-l border-[#4e5156] bg-[#e2e4e9] pl-px outline-none" />
      </label>
    </div>
  );
}

function Triad() {
  return (
    <svg viewBox="0 0 28 42" className="absolute bottom-4 left-[3px] h-[42px] w-7" aria-hidden="true">
      <path d="M23 21l-5-10" stroke="#1b6b22" strokeWidth="3" />
      <path d="M14 6.500l7 4-5.500 4.500z" fill="#237d2b" />
      <path d="M23 21H12" stroke="#1a1fa0" strokeWidth="2.500" />
      <path d="M6.500 21l7-3.500v7z" fill="#1a1fa0" />
      <path d="M23 21l-4 9" stroke="#cf2a26" strokeWidth="3" />
      <path d="M17 34l-1.500-6 6.500 2z" fill="#e02a28" />
      <path d="M21 19h3v3h-3z" fill="#2c2b3a" />
      <g className="text-[8px]">
        <text x="12" y="6.500" fill="#2b7a30">Y</text>
        <text x="2" y="24" fill="#2142d8">Z</text>
        <text x="14" y="39.500" fill="#ea3533">X</text>
      </g>
    </svg>
  );
}

function TaskPane() {
  const items = [
    { label: 'Resources', art: <><path d="M1 6l5-5 5 5H9v5H3V6z" fill="#f6cf3a" stroke="#8a5a14" /><path d="M5 7h2v4H5z" fill="#b04a22" /></> },
    { label: 'Design library', art: <><path d="M1 5l3-1v7L1 10z" fill="#2ea043" stroke="#14602a" /><path d="M4.500 3h3v8h-3z" fill="#f1c62f" stroke="#2a7a3a" /><path d="M8 1h3v10H8z" fill="#3b82d6" stroke="#1d4a8c" /></> },
    { label: 'File explorer', art: <path d="M1 10V2h4l1 1.500h4V5M1 10l2-5h8.500l-2 5z" fill="#fbdc6d" stroke="#a87a12" /> },
    { label: 'View palette', art: <><path d="M1 1h10v3H1zM4 5h7v3H4z" fill="#e9edf1" stroke="#5c6f88" strokeWidth=".8" /><path d="M1 9.500h6M4 7.500v4" stroke="#1d2fe0" strokeWidth="1.300" /></> },
    { label: 'Appearances', art: <><circle cx="6" cy="6" r="5" fill="#2b61d4" /><path d="M6 6V1a5 5 0 0 1 5 5z" fill="#ef3b2d" /><path d="M6 6H1a5 5 0 0 1 5-5z" fill="#f0603a" /><path d="M6 6v5a5 5 0 0 1-5-5z" fill="#38b848" /></> },
    { label: 'Custom properties', art: <><path d="M1.500 4h8v7h-8z" fill="#e6e8ea" stroke="#7d8288" /><path d="M4 4l3-3h4l-1 3-3 1z" fill="#b08a5c" stroke="#5f4b31" strokeWidth=".6" /></> },
  ];
  return (
    <div className="absolute top-6 right-0 flex w-[15px] flex-col border-t border-l border-[#4b4e52]">
      {items.map((i, n) => (
        <IconButton key={i.label} label={i.label} className={`h-[15px] border-b border-[#4b4e52] ${n === 0 ? 'bg-[#edf0f3]' : 'bg-[#a9abae]'}`}>
          <Ico>{i.art}</Ico>
        </IconButton>
      ))}
    </div>
  );
}

function Viewport() {
  return (
    <main className="relative flex min-w-0 flex-1">
      <div className="relative flex-1 overflow-hidden border-r border-[#8a8e96]">
        <p className="relative pt-px text-[7px] leading-3 text-[#1b1c1e]">Default&lt;&lt;Default&gt;_Display State 1...</p>
        <svg viewBox="0 0 5 5" className="absolute top-1 left-[2px] size-[5px]" fill="none" stroke="#333" aria-hidden="true"><path d="M.5 .5h4v4h-4zM2.500 1.500v2M1.500 2.500h2" strokeWidth=".7" /></svg>
        <div className="absolute top-1/2 left-1/2 h-[500px] w-[900px] -translate-1/2">
          <Model />
          <Callout />
          <RedArrow className="top-[232px] left-[635px]" />
        </div>
        <Triad />
        <IconButton label="Accept" className="absolute top-[5px] right-[46px]">
          <svg viewBox="0 0 18 18" className="size-[18px]" aria-hidden="true"><path d="M1 10l2.500-1.500L6 11.500 15 3l1.500 1L6.500 15z" fill="#9fd1a8" stroke="#8cc096" strokeWidth=".7" /></svg>
        </IconButton>
        <IconButton label="Reject" className="absolute top-[25px] right-[27px]">
          <svg viewBox="0 0 16 16" className="size-4" aria-hidden="true"><path d="M2 2l12 12M14 2L2 14" stroke="#d09aa3" strokeWidth="3" /></svg>
        </IconButton>
      </div>
      <div className="w-[2px] bg-[#2b3f58]" />
      <TaskPane />
      <button type="button" aria-label="Collapse panel" className="absolute top-[230px] -left-px flex h-[26px] w-[6px] flex-col items-center justify-center gap-[3px] border border-l-0 border-[#55585c] bg-[#e2e5ea]">
        {[0, 1, 2].map((i) => <span key={i} className="size-[2px] bg-[#26292c]" />)}
      </button>
    </main>
  );
}

/* ---------- bottom bars ---------- */

function BottomTabs() {
  return (
    <nav role="tablist" aria-label="Model views" className="flex h-[10px] shrink-0 border-t border-[#515458] bg-[#e2e6ea] text-[7px] leading-2">
      <div className="flex w-[45px] bg-[#a1a4a7]">
        {['M3 1v5M7 1L4 3.500 7 6z', 'M6 1L3 3.500 6 6z', 'M3 1l3 2.500L3 6z', 'M2 1l3 2.500L2 6zM6 1v5'].map((d, i) => (
          <IconButton key={d} label={['First tab', 'Previous tab', 'Next tab', 'Last tab'][i]} className="w-[11px] border-r border-[#8b8e91]">
            <svg viewBox="0 0 9 7" className="h-[7px] w-[9px]" aria-hidden="true"><path d={d} fill="#85888c" stroke="#85888c" /></svg>
          </IconButton>
        ))}
      </div>
      <button type="button" role="tab" aria-selected="true" className="w-[35px] border-r border-[#515458] bg-[#eceff1] font-bold text-[#111]">Model</button>
      <button type="button" role="tab" aria-selected="false" className="w-[43px] border-r border-b border-[#515458] bg-[#a6a8ab] whitespace-nowrap text-[#1f2123]">3D Views</button>
      <button type="button" role="tab" aria-selected="false" className="w-[67px] border-r border-b border-[#515458] bg-[#a6a8ab] pr-1 whitespace-nowrap text-[#1f2123]">Motion Study 1</button>
    </nav>
  );
}

function StatusBar() {
  return (
    <footer className="flex h-[13px] shrink-0 items-center border-t border-b border-[#8e9194] border-b-[#4d5054] bg-[#d7dade] pl-[2px] text-[7px] leading-[11px] whitespace-nowrap text-[#222]">
      <span className="flex-1">Select edge or axis for direction reference, select face of feature for pattern features</span>
      <span className="w-[70px]">Length: 450mm</span>
      <span className="w-[73px]">Editing Part</span>
      <span className="w-[34px] text-[#a9acb0]">MMGS</span>
      <Caret label="Units" className="mr-[10px]" color="#777b80" />
      <IconButton label="Quick tips">
        <Ico className="size-[10px]"><path d="M1 .5h10v11H1z" fill="#f4faf4" stroke="#5a6d80" /><path d="M4 4c0-2.500 4-2.500 4-.3C8 5.500 6 5.500 6 7.500M6 8.800v1.500" stroke="#20953a" strokeWidth="1.600" /></Ico>
      </IconButton>
      <IconButton label="Tags" className="mr-[3px] ml-9">
        <Ico><path d="M1 8l6-6 3-.5L11.500 4 5.500 10.500 3 11z" fill="#f3b81f" stroke="#a0700c" strokeWidth=".8" /><path d="M3 8l5-5" stroke="#fde48a" /></Ico>
      </IconButton>
    </footer>
  );
}

export default function App() {
  return (
    <div className="flex h-screen flex-col overflow-hidden bg-[#c4c8d3] font-['Noto_Sans','Open_Sans',sans-serif]">
      <TitleBar />
      <SheetToolbar />
      <div className="flex h-[14px] shrink-0">
        <CommandTabs />
        <div className="flex h-[17px] flex-1 items-center justify-between pr-[7px] pl-[99px]">
          <ViewToolbar />
          <div className="flex items-center gap-[3px]">
            <IconButton label="Collapse left"><Ico><path d="M2 2h8v8H2zM4 4v4M8 4L6 6l2 2" fill="#edf0f2" stroke="#777b80" /></Ico></IconButton>
            <IconButton label="Collapse right"><Ico><path d="M2 2h8v8H2zM4 4v4M6 4l2 2-2 2" fill="#edf0f2" stroke="#777b80" /></Ico></IconButton>
            <WindowButtons />
          </div>
        </div>
      </div>
      <div className="relative flex min-h-0 flex-1">
        <PropertyPanel />
        <Viewport />
        <RedArrow className="top-[193px] left-[95px]" />
      </div>
      <BottomTabs />
      <StatusBar />
    </div>
  );
}
